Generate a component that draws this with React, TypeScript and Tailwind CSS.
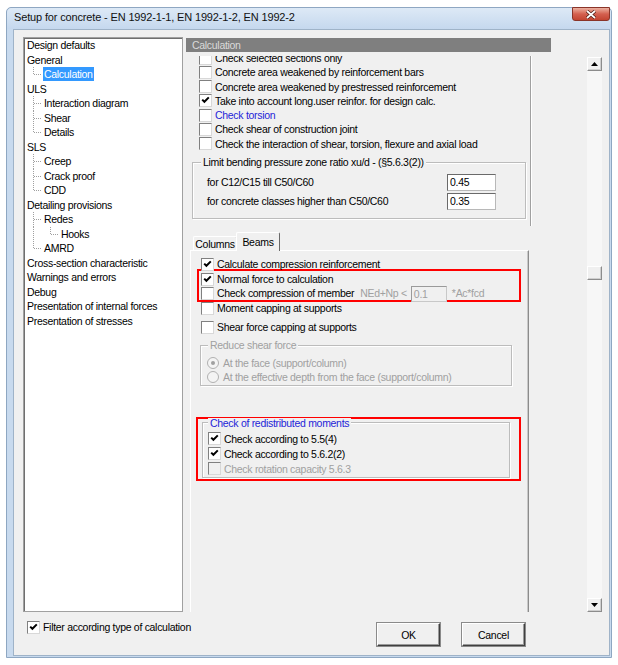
import React from "react";

type TreeNode = {
  label: string;
  depth: number;
  last?: boolean;
  through?: boolean;
  selected?: boolean;
};

const tree: TreeNode[] = [
  { label: "Design defaults", depth: 0 },
  { label: "General", depth: 0 },
  { label: "Calculation", depth: 1, last: true, selected: true },
  { label: "ULS", depth: 0 },
  { label: "Interaction diagram", depth: 1 },
  { label: "Shear", depth: 1 },
  { label: "Details", depth: 1, last: true },
  { label: "SLS", depth: 0 },
  { label: "Creep", depth: 1 },
  { label: "Crack proof", depth: 1 },
  { label: "CDD", depth: 1, last: true },
  { label: "Detailing provisions", depth: 0 },
  { label: "Redes", depth: 1 },
  { label: "Hooks", depth: 2, last: true, through: true },
  { label: "AMRD", depth: 1, last: true },
  { label: "Cross-section characteristic", depth: 0 },
  { label: "Warnings and errors", depth: 0 },
  { label: "Debug", depth: 0 },
  { label: "Presentation of internal forces", depth: 0 },
  { label: "Presentation of stresses", depth: 0 },
];

const calcRows = [
  { label: "Check selected sections only" },
  { label: "Concrete area weakened by reinforcement bars" },
  { label: "Concrete area weakened by prestressed reinforcement" },
  { label: "Take into account long.user reinfor. for design calc.", on: true },
  { label: "Check torsion", blue: true },
  { label: "Check shear of construction joint" },
  { label: "Check the interaction of shear, torsion, flexure and axial load" },
];

function Guide({ own, last, through }: { own: boolean; last?: boolean; through?: boolean }) {
  const dot = { stroke: "#a0a0a0", strokeDasharray: "1 1", shapeRendering: "crispEdges" as const };
  return (
    <svg width="17" height="14.5" viewBox="0 0 17 14.5" className="shrink-0">
      {own ? (
        <>
          <line x1="6.5" y1="0" x2="6.5" y2={last ? 7.5 : 14.5} {...dot} />
          <line x1="7" y1="7.5" x2="15" y2="7.5" {...dot} />
        </>
      ) : (
        through && <line x1="6.5" y1="0" x2="6.5" y2="14.5" {...dot} />
      )}
    </svg>
  );
}

function Box({ on, off }: { on?: boolean; off?: boolean }) {
  return (
    <span
      className={`flex items-center justify-center w-[13px] h-[13px] shrink-0 border border-t-[#808080] border-l-[#808080] border-r-[#d8d8d8] border-b-[#d8d8d8] ${
        off ? "bg-[#f0f0f0]" : "bg-white"
      }`}
    >
      {on && (
        <svg width="9" height="9" viewBox="0 0 9 9">
          <path d="M1.2 3.6 L3.4 5.8 L7.8 1.4" stroke="#000" strokeWidth="2" fill="none" />
        </svg>
      )}
    </span>
  );
}

function Check({
  label,
  on,
  off,
  blue,
  className = "",
  children,
}: {
  label: string;
  on?: boolean;
  off?: boolean;
  blue?: boolean;
  className?: string;
  children?: React.ReactNode;
}) {
  return (
    <div className={`flex items-center whitespace-nowrap ${className}`}>
      <Box on={on} off={off} />
      <span className={`ml-[3px] ${off ? "text-[#a0a0a0]" : blue ? "text-[#1f1fd8]" : "text-black"}`}>{label}</span>
      {children}
    </div>
  );
}

function Radio({ label, on }: { label: string; on?: boolean }) {
  return (
    <div className="flex items-center gap-[4px] h-[14px] whitespace-nowrap">
      <svg width="12" height="12" viewBox="0 0 12 12" className="shrink-0">
        <circle cx="6" cy="6" r="5.5" fill="#f4f4f4" stroke="#b0b0b0" />
        {on && <circle cx="6" cy="6" r="2" fill="#a0a0a0" />}
      </svg>
      <span className="text-[#a0a0a0]">{label}</span>
    </div>
  );
}

function Group({
  title,
  className = "",
  legendClass = "",
  children,
}: {
  title: string;
  className?: string;
  legendClass?: string;
  children: React.ReactNode;
}) {
  return (
    <div className={`border border-[#bcbcbc] shadow-[inset_1px_1px_0_#ffffff,1px_1px_0_#ffffff] ${className}`}>
      <div className={`w-fit bg-[#f0f0f0] px-[2px] whitespace-nowrap ${legendClass}`}>{title}</div>
      {children}
    </div>
  );
}

function ScrollButton({ dir }: { dir?: "up" | "down" }) {
  return (
    <div className="flex items-center justify-center w-[15px] h-[14px] bg-[#f0f0f0] border border-t-white border-l-white border-b-[#8c8c8c] border-r-[#8c8c8c] shadow-[inset_-1px_-1px_0_#cfcfcf]">
      {dir && (
        <svg width="7" height="4" viewBox="0 0 7 4">
          <path d={dir === "up" ? "M3.5 0 L7 4 L0 4 Z" : "M0 0 L7 0 L3.5 4 Z"} fill="#000" />
        </svg>
      )}
    </div>
  );
}

function Button({ label }: { label: string }) {
  return (
    <div className="flex items-center justify-center w-[63px] h-[23px] bg-[#f0f0f0] border border-t-white border-l-white border-b-[#404040] border-r-[#404040] shadow-[inset_-1px_-1px_0_#9a9a9a,0_0_0_1px_#8a8a8a]">
      {label}
    </div>
  );
}

export default function App() {
  return (
    <div className="w-[618px] h-[665px] bg-white overflow-hidden pt-[7px] pl-[6px] font-['Liberation_Sans',Arial,sans-serif] text-[10.5px] tracking-[-0.3px] text-black leading-[14px]">
      {/* Window frame */}
      <div className="w-[606px] h-[651px] flex flex-col border border-[#8ea7c2] rounded-t-[5px] bg-[#c8daee]">
        {/* Title bar */}
        <div className="h-[21px] flex items-start pl-[7px] bg-gradient-to-b from-[#dde9f6] to-[#c5d8ee] rounded-t-[5px]">
          <span className="pt-[2px] text-[11px] tracking-[-0.15px] text-[#111]">
            Setup for concrete - EN 1992-1-1, EN 1992-1-2, EN 1992-2
          </span>
          <div className="ml-auto mr-[1px] -mt-[1px] w-[38px] h-[14px] flex items-center justify-center rounded-b-[3px] border border-[#8a3428] bg-gradient-to-b from-[#eab0a0] via-[#d4604f] to-[#c24431]">
            <svg width="12" height="9" viewBox="0 0 12 9">
              <path d="M2 1 L10 8 M10 1 L2 8" stroke="#4a1a12" strokeWidth="3.2" />
              <path d="M2 1 L10 8 M10 1 L2 8" stroke="#ffffff" strokeWidth="1.7" />
            </svg>
          </div>
        </div>

        {/* Client area */}
        <div className="ml-[6px] w-[597px] h-[627px] flex flex-col border border-[#9fb3c8] bg-[#f0f0f0]">
          <div className="flex items-start pt-[7px] pl-[9px]">
            {/* Tree */}
            <div className="w-[160px] h-[575px] bg-white border border-[#a0a0a0] shadow-[inset_1px_1px_0_#6f6f6f] pl-[3px]">
              {tree.map((n) => (
                <div key={n.label} className="flex items-center h-[14.5px] whitespace-nowrap">
                  {Array.from({ length: n.depth }).map((_, i) => (
                    <Guide key={i} own={i === n.depth - 1} last={n.last} through={n.through} />
                  ))}
                  {n.selected ? (
                    <span className="-ml-[1px] px-[1px] bg-[#3399ff] text-white leading-[14px]">{n.label}</span>
                  ) : (
                    <span>{n.label}</span>
                  )}
                </div>
              ))}
            </div>

            {/* Right side */}
            <div className="ml-[3px] mt-[1px] w-[365px] flex flex-col">
              <div className="h-[14px] bg-[#7f7f7f] text-[#dadada] pl-[6px] leading-[14px]">Calculation</div>

              <div className="mt-[4px] h-[556px] overflow-hidden">
                {/* Calculation options */}
                <div className="w-[345px] h-[170px] overflow-hidden border-r border-[#a0a0a0] shadow-[1px_0_0_#ffffff]">
                  <div className="-mt-[5px] pl-[13px]">
                    {calcRows.map((r) => (
                      <Check key={r.label} label={r.label} on={r.on} blue={r.blue} className="h-[14.25px]" />
                    ))}
                  </div>
                  <Group
                    title="Limit bending pressure zone ratio xu/d -  (§5.6.3(2))"
                    className="ml-[6px] mt-[11px] w-[334px] pb-[8px]"
                    legendClass="-mt-[8px] ml-[8px]"
                  >
                    <div className="mt-[5px] flex flex-col gap-[2px]">
                      {[
                        ["for C12/C15 till C50/C60", "0.45"],
                        ["for concrete classes higher than C50/C60", "0.35"],
                      ].map(([l, v]) => (
                        <div key={l} className="flex items-center justify-between h-[17px] pl-[14px] pr-[29px]">
                          <span>{l}</span>
                          <div className="w-[49px] h-[17px] bg-white border border-[#b8b8b8] border-t-[#6a6a6a] border-l-[#6a6a6a] pl-[2px] leading-[15px]">
                            {v}
                          </div>
                        </div>
                      ))}
                    </div>
                  </Group>
                </div>

                {/* Tabs */}
                <div className="ml-[4px] mt-[6px]">
                  <div className="flex items-end h-[18px] pl-[3px]">
                    <div className="w-[44px] h-[14px] flex items-center justify-center border-t border-l border-white border-r border-r-[#8c8c8c] rounded-t-[2px]">
                      Columns
                    </div>
                    <div className="relative -ml-[1px] -mb-[1px] w-[44px] h-[19px] flex items-center justify-center pb-[1px] bg-[#f0f0f0] border-t border-l border-white border-r border-r-[#6a6a6a] rounded-t-[2px]">
                      Beams
                    </div>
                  </div>

                  <div className="w-[339px] h-[380px] border-t border-l border-white border-r border-r-[#8c8c8c] shadow-[inset_-1px_0_0_#c8c8c8]">
                    <Check label="Calculate compression reinforcement" on className="ml-[10px] mt-[6px] h-[14px]" />

                    <div className="ml-[6px] -mt-[2px] w-[324px] border-2 border-[#ff0000] pt-[1px] pl-[2px]">
                      <Check label="Normal force to calculation" on className="h-[14px]" />
                      <Check label="Check compression of member" className="h-[14px]">
                        <span className="ml-[6px] text-[#a0a0a0]">NEd+Np &lt;</span>
                        <div className="ml-[4px] w-[36px] h-[16px] mt-[2px] bg-[#f0f0f0] border border-[#c8c8c8] border-t-[#9a9a9a] border-l-[#9a9a9a] pl-[2px] leading-[14px] text-[#a0a0a0]">
                          0.1
                        </div>
                        <span className="ml-[5px] text-[#a0a0a0]">*Ac*fcd</span>
                      </Check>
                    </div>

                    <Check label="Moment capping at supports" className="ml-[10px] -mt-[1px] h-[14px]" />
                    <Check label="Shear force capping at supports" className="ml-[10px] mt-[5px] h-[14px]" />

                    <Group
                      title="Reduce shear force"
                      className="ml-[9px] mt-[11px] w-[312px] pb-[1px]"
                      legendClass="-mt-[8px] ml-[7px] text-[#a0a0a0]"
                    >
                      <div className="mt-[4px] pl-[6px]">
                        <Radio label="At the face (support/column)" on />
                        <Radio label="At the effective depth from the face (support/column)" />
                      </div>
                    </Group>

                    <div className="ml-[5px] mt-[31px] w-[325px] border-2 border-[#ff0000] pb-[1px]">
                      <Group
                        title="Check of redistributed moments"
                        className="ml-[4px] mt-[3px] w-[308px] pb-[1px]"
                        legendClass="-mt-[5px] ml-[5px] leading-[10px] text-[#2424d8]"
                      >
                        <div className="mt-[3px] pl-[5px]">
                          <Check label="Check according to 5.5(4)" on className="h-[15px]" />
                          <Check label="Check according to 5.6.2(2)" on className="h-[15px]" />
                          <Check label="Check rotation capacity 5.6.3" off className="h-[15px]" />
                        </div>
                      </Group>
                    </div>
                  </div>
                </div>
              </div>
            </div>

            {/* Scrollbar */}
            <div className="ml-[36px] mt-[20px] w-[15px] h-[555px] flex flex-col bg-[#f7f7f7]">
              <ScrollButton dir="up" />
              <div className="h-[195px]" />
              <ScrollButton />
              <div className="flex-1" />
              <ScrollButton dir="down" />
            </div>
          </div>

          {/* Bottom bar */}
          <div className="flex items-start">
            <Check label="Filter according type of calculation" on className="ml-[13px] mt-[8px] h-[14px]" />
            <div className="ml-auto mr-[84px] mt-[11px] flex gap-[22px]">
              <Button label="OK" />
              <Button label="Cancel" />
            </div>
          </div>
        </div>
      </div>
    </div>
  );
}
